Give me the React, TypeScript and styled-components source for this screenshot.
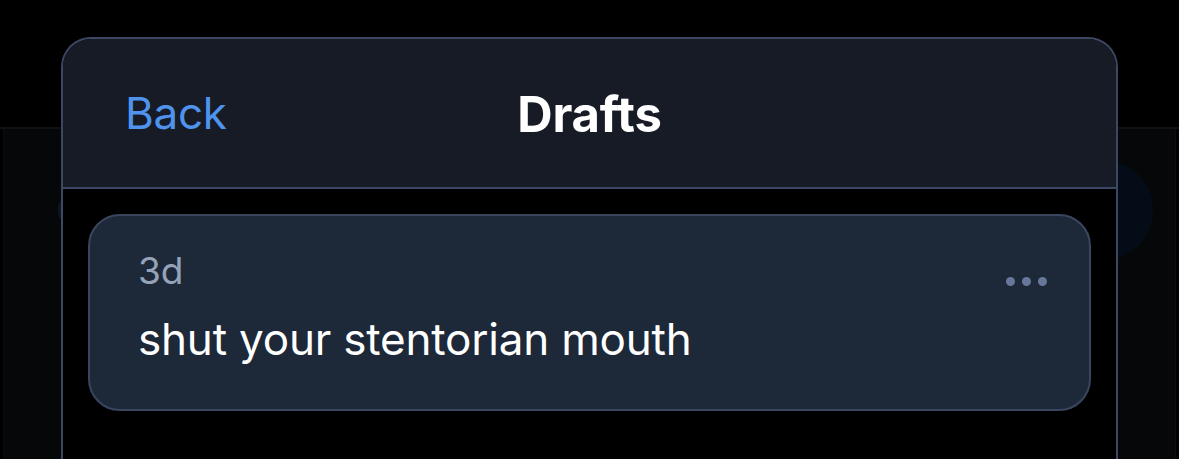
import React from "react";
import styled, { createGlobalStyle } from "styled-components";

const Global = createGlobalStyle`
  html, body { margin: 0; padding: 0; background: #000; }
  body { font-family: Inter, "Noto Sans", "Liberation Sans", sans-serif; -webkit-font-smoothing: antialiased; }
  #root { width: 1179px; height: 459px; overflow: hidden; position: relative; }
`;

const Page = styled.div`
  width: 1179px;
  height: 459px;
  display: flex;
  flex-direction: column;
  background: #000;
`;

const TopBar = styled.div`
  height: 127px;
  flex-shrink: 0;
  border-bottom: 2px solid #101114;
`;

const Content = styled.div`
  flex: 1;
  margin: 0 3px;
  background: #060709;
  border-left: 1px solid #0c0d10;
  border-right: 1px solid #0c0d10;
  position: relative;
`;

const Blob = styled.div<{ $x: number; $y: number; $r: number; $c: string; $outline?: boolean }>`
  position: absolute;
  left: ${(p) => p.$x - p.$r}px;
  top: ${(p) => p.$y - p.$r}px;
  width: ${(p) => p.$r * 2}px;
  height: ${(p) => p.$r * 2}px;
  box-sizing: border-box;
  border-radius: 50%;
  background: ${(p) => (p.$outline ? "transparent" : p.$c)};
  border: ${(p) => (p.$outline ? `3px solid ${p.$c}` : "none")};
`;

const Overlay = styled.div`
  position: absolute;
  left: 61px;
  top: 37px;
  width: 1057px;
  height: 440px;
  box-sizing: border-box;
  border: 2px solid #3c4863;
  border-bottom: none;
  border-radius: 30px 30px 0 0;
  background: #000;
  display: flex;
  flex-direction: column;
  overflow: hidden;
`;

const Header = styled.div`
  height: 148px;
  flex-shrink: 0;
  background: #161b26;
  border-bottom: 2px solid #3c4863;
  display: grid;
  grid-template-columns: 1fr auto 1fr;
  align-items: center;
  padding: 0 62px;
`;

const BackButton = styled.button`
  justify-self: start;
  background: none;
  border: none;
  padding: 0;
  color: #4f93ec;
  font-family: inherit;
  font-size: 44px;
  font-weight: 400;
  letter-spacing: -0.3px;
  cursor: pointer;
`;

const Title = styled.h1`
  margin: 0;
  margin-top: 2px;
  color: #fff;
  font-size: 49px;
  font-weight: 700;
  letter-spacing: -0.2px;
`;

const Body = styled.div`
  padding: 25px;
`;

const DraftCard = styled.div`
  height: 197px;
  box-sizing: border-box;
  border: 2px solid #3a465f;
  border-radius: 32px;
  background: #1d2839;
  position: relative;
  padding: 32px 48px 0 48px;
  display: flex;
  flex-direction: column;
`;

const Time = styled.div`
  color: #94a3b8;
  font-size: 37px;
  line-height: 46px;
`;

const Text = styled.div`
  color: #fff;
  font-size: 44px;
  line-height: 54px;
  margin-top: 18px;
  letter-spacing: -0.2px;
`;

const More = styled.div`
  position: absolute;
  right: 42px;
  top: 61px;
  display: flex;
  gap: 7px;
`;

const Dot = styled.span`
  width: 9px;
  height: 9px;
  border-radius: 50%;
  background: #66779a;
`;

export default function App() {
  return (
    <>
      <Global />
      <Page>
        <TopBar />
        <Content>
          <Blob $x={1099} $y={81} $r={50} $c="#040c18" />
          <Blob $x={72} $y={81} $r={18} $c="#0c1628" $outline />
        </Content>
      </Page>
      <Overlay>
        <Header>
          <BackButton>Back</BackButton>
          <Title>Drafts</Title>
          <span />
        </Header>
        <Body>
          <DraftCard>
            <Time>3d</Time>
            <Text>shut your stentorian mouth</Text>
            <More>
              <Dot />
              <Dot />
              <Dot />
            </More>
          </DraftCard>
        </Body>
      </Overlay>
    </>
  );
}
